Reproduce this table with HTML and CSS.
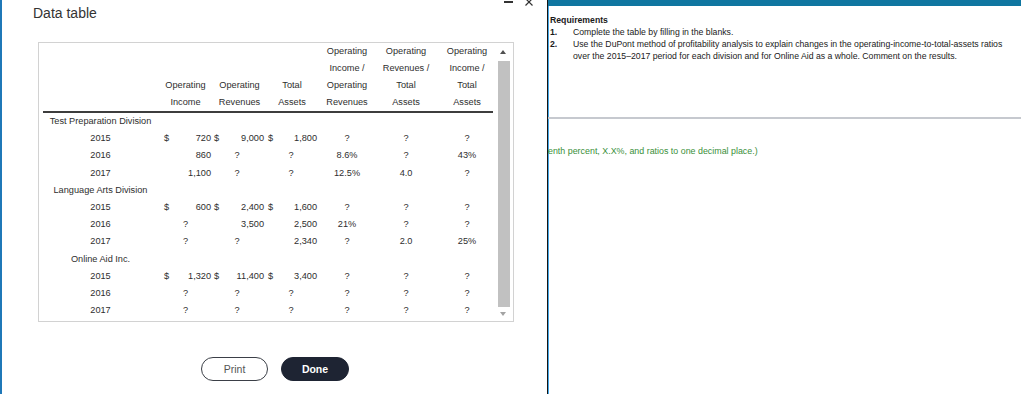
FILE: index.html
```html
<!DOCTYPE html>
<html lang="en">
<head>
<meta charset="utf-8">
<title>Data table</title>
<link rel="stylesheet" href="styles.css">
</head>
<body>
<div class="screen">
  <section class="dialog">
    <div class="winctl">
      <svg class="ico-min" width="10" height="4" viewBox="0 0 10 4"><rect x="0" y="1" width="9" height="2" fill="#333"/></svg>
      <svg class="ico-close" width="10" height="10" viewBox="0 0 10 10"><path d="M1.5 1.5 L8.5 8.5 M8.5 1.5 L1.5 8.5" stroke="#333" stroke-width="1.2" fill="none"/></svg>
    </div>
    <h1 class="title">Data table</h1>
    <div class="tablebox">
      <div class="tablearea">
        <table class="dt">
          <colgroup>
            <col class="w-label"><col class="w-d1"><col class="w-v1"><col class="w-d"><col class="w-v2"><col class="w-d"><col class="w-v3"><col class="w-r1"><col class="w-r2"><col class="w-r3">
          </colgroup>
          <thead>
            <tr>
              <th></th>
              <th colspan="2">Operating<br>Income</th>
              <th colspan="2">Operating<br>Revenues</th>
              <th colspan="2">Total<br>Assets</th>
              <th>Operating<br>Income /<br>Operating<br>Revenues</th>
              <th>Operating<br>Revenues /<br>Total<br>Assets</th>
              <th class="r3">Operating<br>Income /<br>Total<br>Assets</th>
            </tr>
          </thead>
          <tbody>
            <tr><td class="lbl">Test Preparation Division</td><td colspan="9"></td></tr>
            <tr><td class="lbl">2015</td><td class="d1">$</td><td class="v1">720</td><td class="d2">$</td><td class="v2">9,000</td><td class="d3">$</td><td class="v3">1,800</td><td class="c">?</td><td class="c">?</td><td class="c r3">?</td></tr>
            <tr><td class="lbl">2016</td><td></td><td class="v1">860</td><td colspan="2" class="q2">?</td><td colspan="2" class="q3">?</td><td class="c">8.6%</td><td class="c">?</td><td class="c r3">43%</td></tr>
            <tr><td class="lbl">2017</td><td></td><td class="v1">1,100</td><td colspan="2" class="q2">?</td><td colspan="2" class="q3">?</td><td class="c">12.5%</td><td class="c">4.0</td><td class="c r3">?</td></tr>
            <tr><td class="lbl">Language Arts Division</td><td colspan="9"></td></tr>
            <tr><td class="lbl">2015</td><td class="d1">$</td><td class="v1">600</td><td class="d2">$</td><td class="v2">2,400</td><td class="d3">$</td><td class="v3">1,600</td><td class="c">?</td><td class="c">?</td><td class="c r3">?</td></tr>
            <tr><td class="lbl">2016</td><td colspan="2" class="q1">?</td><td></td><td class="v2">3,500</td><td></td><td class="v3">2,500</td><td class="c">21%</td><td class="c">?</td><td class="c r3">?</td></tr>
            <tr><td class="lbl">2017</td><td colspan="2" class="q1">?</td><td colspan="2" class="q2">?</td><td></td><td class="v3">2,340</td><td class="c">?</td><td class="c">2.0</td><td class="c r3">25%</td></tr>
            <tr><td class="lbl">Online Aid Inc.</td><td colspan="9"></td></tr>
            <tr><td class="lbl">2015</td><td class="d1">$</td><td class="v1">1,320</td><td class="d2">$</td><td class="v2">11,400</td><td class="d3">$</td><td class="v3">3,400</td><td class="c">?</td><td class="c">?</td><td class="c r3">?</td></tr>
            <tr><td class="lbl">2016</td><td colspan="2" class="q1">?</td><td colspan="2" class="q2">?</td><td colspan="2" class="q3">?</td><td class="c">?</td><td class="c">?</td><td class="c r3">?</td></tr>
            <tr><td class="lbl">2017</td><td colspan="2" class="q1">?</td><td colspan="2" class="q2">?</td><td colspan="2" class="q3">?</td><td class="c">?</td><td class="c">?</td><td class="c r3">?</td></tr>
          </tbody>
        </table>
      </div>
      <div class="sb">
        <span class="sb-up"><i class="tri-up"></i></span>
        <span class="sb-thumb"></span>
        <span class="sb-down"><i class="tri-down"></i></span>
      </div>
    </div>
    <div class="actions">
      <button class="btn btn-print" type="button">Print</button>
      <button class="btn btn-done" type="button">Done</button>
    </div>
  </section>
  <section class="side">
    <div class="side-bar"></div>
    <div class="req">
      <div class="req-title">Requirements</div>
      <div class="req-item"><span class="req-num">1.</span><span class="req-text">Complete the table by filling in the blanks.</span></div>
      <div class="req-item"><span class="req-num">2.</span><span class="req-text">Use the DuPont method of profitability analysis to explain changes in the operating-income-to-total-assets ratios over the 2015–2017 period for each division and for Online Aid as a whole. Comment on the results.</span></div>
    </div>
    <div class="rule"></div>
    <p class="hint">enth percent, X.X%, and ratios to one decimal place.)</p>
  </section>
</div>
</body>
</html>
```
FILE: styles.css
```css
html, body {
  margin: 0;
  padding: 0;
  background: #fff;
  font-family: "Liberation Sans", Arial, sans-serif;
}

.screen {
  display: flex;
  width: 1021px;
  height: 394px;
  overflow: hidden;
}

/* ---------- dialog ---------- */
.dialog {
  position: relative;
  width: 545px;
  flex: none;
  border-left: 2px solid #1f78b8;
  padding-top: 5px;
  box-sizing: content-box;
}

.winctl .ico-min {
  position: absolute;
  left: 502px;
  top: 0;
}

.winctl .ico-close {
  position: absolute;
  left: 522px;
  top: -3px;
}

.title {
  margin: 0 0 0 31px;
  font-size: 14px;
  font-weight: normal;
  line-height: 16px;
  color: #333;
}

.tablebox {
  display: flex;
  margin: 21px 0 0 36px;
  width: 476px;
  height: 280px;
  border: 1px solid #d2d2d2;
  box-sizing: border-box;
}

.tablearea {
  flex: 1;
  padding-left: 4px;
}

.dt {
  table-layout: fixed;
  width: 450px;
  border-collapse: collapse;
  font-size: 9.2px;
  color: #2e2e2e;
}

.w-label { width: 115px; }
.w-d1 { width: 17px; }
.w-v1 { width: 38px; }
.w-d { width: 9px; }
.w-v2 { width: 44px; }
.w-v3 { width: 43px; }
.w-r1 { width: 58px; }
.w-r2 { width: 60px; }
.w-r3 { width: 57px; }

.dt th {
  font-weight: normal;
  line-height: 17px;
  vertical-align: bottom;
  padding: 0;
  text-align: center;
  white-space: nowrap;
  border-bottom: 2px solid #3d3d3d;
}

.dt td {
  height: 17.2px;
  line-height: 17.2px;
  padding: 0;
  white-space: nowrap;
}

.dt .lbl { text-align: center; }
.dt .d1 { text-align: left; padding-left: 6px; }
.dt .v1 { text-align: right; padding-right: 2px; }
.dt .d2 { text-align: left; padding-left: 1px; }
.dt .v2 { text-align: right; padding-right: 2px; }
.dt .d3 { text-align: left; padding-left: 2px; }
.dt .v3 { text-align: right; padding-right: 1px; }
.dt .c { text-align: center; }
.dt .r3 { padding-left: 5px; }
.dt .q1 { text-align: center; }
.dt .q2 { text-align: center; padding-right: 5px; }
.dt .q3 { text-align: center; padding-right: 2px; }

/* scrollbar */
.sb {
  width: 16px;
  flex: none;
  display: flex;
  flex-direction: column;
}

.sb-up {
  height: 17px;
  display: flex;
  align-items: center;
  justify-content: center;
  padding-right: 4px;
}

.sb-thumb {
  flex: 1;
  margin: 1px 3px 0 1px;
  background: #c1c1c1;
}

.sb-down {
  height: 14px;
  display: flex;
  align-items: center;
  justify-content: center;
  padding-right: 4px;
}

.tri-up {
  width: 0;
  height: 0;
  border-left: 3px solid transparent;
  border-right: 3px solid transparent;
  border-bottom: 4px solid #505050;
}

.tri-down {
  width: 0;
  height: 0;
  border-left: 3px solid transparent;
  border-right: 3px solid transparent;
  border-top: 4px solid #a3a3a3;
}

/* buttons */
.actions {
  display: flex;
  justify-content: center;
  gap: 13px;
  width: 476px;
  margin: 35px 0 0 35px;
}

.btn {
  height: 24px;
  border-radius: 12px;
  font-family: "Liberation Sans", Arial, sans-serif;
  font-size: 10.5px;
  padding: 0;
  box-sizing: border-box;
}

.btn-print {
  width: 67px;
  background: #fff;
  color: #555;
  border: 1.5px solid #3b3f47;
}

.btn-done {
  width: 68px;
  background: #1e2433;
  color: #fff;
  font-weight: bold;
  border: 1px solid #1e2433;
}

/* ---------- side panel ---------- */
.side {
  flex: 1;
  border-left: 1px solid #151515;
  box-shadow: inset 1px 0 0 #45a8e8;
  color: #1a1a1a;
}

.side-bar {
  height: 6px;
  background: #0f76a0;
}

.req {
  padding: 8px 0 0 2px;
  font-size: 8.7px;
  line-height: 12px;
}

.req-title {
  font-weight: bold;
}

.req-item {
  display: flex;
}

.req-num {
  width: 23px;
  flex: none;
  font-weight: bold;
}

.req-text {
  flex: 1;
  padding-right: 6px;
}

.rule {
  margin-top: 55px;
  height: 2px;
  background: #c6c9cf;
}

.hint {
  margin: 26px 0 0 0;
  font-size: 8.9px;
  line-height: 12px;
  color: #3a8f3a;
  white-space: nowrap;
}
```
